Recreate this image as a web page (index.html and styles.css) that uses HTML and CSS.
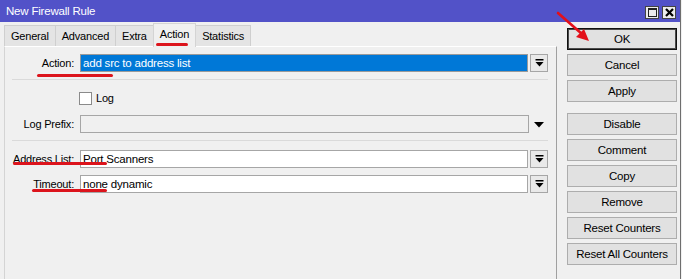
FILE: index.html
```html
<!DOCTYPE html>
<html lang="en">

<head>
  <meta charset="UTF-8">
  <title>New Firewall Rule</title>
  <link rel="stylesheet" href="styles.css">
</head>

<body>
  <div class="window">
    <div class="titlebar">
      <span class="title">New Firewall Rule</span>
      <div class="win-buttons">
        <span class="wbtn max"><span class="max-square"></span></span>
        <span class="wbtn close">
          <svg width="9" height="9" viewBox="0 0 9 9"><path d="M1 1 L8 8 M8 1 L1 8" stroke="#000" stroke-width="2.2" /></svg>
        </span>
      </div>
    </div>

    <div class="body">
      <div class="main">
        <div class="tabs">
          <div class="tab">General</div>
          <div class="tab">Advanced</div>
          <div class="tab">Extra</div>
          <div class="tab selected">Action</div>
          <div class="tab">Statistics</div>
        </div>

        <div class="panel">
          <div class="row first">
            <label class="label">Action:</label>
            <div class="field chosen">add src to address list</div>
            <span class="dd-button">
              <svg width="9" height="8" viewBox="0 0 9 8"><rect x="0.5" y="0" width="8" height="1.5" fill="#000" /><path d="M0.5 3 H8.5 L4.5 7.5 Z" fill="#000" /></svg>
            </span>
          </div>

          <div class="separator"></div>

          <div class="row check-row">
            <span class="label"></span>
            <label class="check"><span class="box"></span>Log</label>
          </div>

          <div class="row">
            <label class="label">Log Prefix:</label>
            <div class="field disabled wide"></div>
            <span class="dd-plain">
              <svg width="10" height="6" viewBox="0 0 10 6"><path d="M0 0 H10 L5 5.5 Z" fill="#000" /></svg>
            </span>
          </div>

          <div class="separator"></div>

          <div class="row">
            <label class="label">Address List:</label>
            <div class="field">Port Scanners</div>
            <span class="dd-button">
              <svg width="9" height="8" viewBox="0 0 9 8"><rect x="0.5" y="0" width="8" height="1.5" fill="#000" /><path d="M0.5 3 H8.5 L4.5 7.5 Z" fill="#000" /></svg>
            </span>
          </div>

          <div class="row">
            <label class="label">Timeout:</label>
            <div class="field">none dynamic</div>
            <span class="dd-button">
              <svg width="9" height="8" viewBox="0 0 9 8"><rect x="0.5" y="0" width="8" height="1.5" fill="#000" /><path d="M0.5 3 H8.5 L4.5 7.5 Z" fill="#000" /></svg>
            </span>
          </div>
        </div>
      </div>

      <div class="buttons">
        <div class="btn default">OK</div>
        <div class="btn">Cancel</div>
        <div class="btn">Apply</div>
        <div class="btn spaced">Disable</div>
        <div class="btn">Comment</div>
        <div class="btn">Copy</div>
        <div class="btn">Remove</div>
        <div class="btn">Reset Counters</div>
        <div class="btn">Reset All Counters</div>
      </div>
    </div>

    <!-- red annotation marks drawn over the dialog -->
    <span class="mark mark-tab"></span>
    <span class="mark mark-action"></span>
    <span class="mark mark-address"></span>
    <span class="mark mark-timeout"></span>
    <svg class="arrow" width="40" height="34" viewBox="0 0 40 34">
      <path d="M2 2 L26 23" stroke="#e3101a" stroke-width="2.6" stroke-linecap="round" />
      <path d="M33 30 L20 26 L28 18 Z" fill="#e3101a" />
    </svg>
  </div>
</body>

</html>
```

FILE: styles.css
```css
body {
  margin: 0;
  background: #f0f0f0;
  font-family: "Liberation Sans", Arial, sans-serif;
  font-size: 11px;
  letter-spacing: -0.2px;
  color: #000;
}

.window {
  position: relative;
  width: 680px;
  height: 279px;
  border-right: 1px solid #6e6e6e;
  background: #f0f0f0;
  overflow: hidden;
}

.titlebar {
  height: 22px;
  background: #5252c8;
  display: flex;
  align-items: center;
  justify-content: space-between;
  padding: 0 4px 0 6px;
}

.title {
  color: #fff;
  font-size: 11.5px;
}

.win-buttons {
  display: flex;
  gap: 3px;
  padding-top: 2px;
}

.wbtn {
  width: 12px;
  height: 11px;
  background: #ececec;
  border: 1px solid #444;
  display: flex;
  align-items: center;
  justify-content: center;
}

.max-square {
  width: 7px;
  height: 6px;
  border: 1px solid #222;
  border-top-width: 2px;
}

.body {
  display: flex;
  gap: 10px;
}

.main {
  margin-left: 4px;
  width: 553px;
}

.tabs {
  display: flex;
  height: 24px;
  align-items: flex-end;
}

.tab {
  height: 20px;
  line-height: 20px;
  padding: 0 6px;
  background: #e4e4e4;
  border: 1px solid #cfcfcf;
  border-bottom: none;
  margin-right: -1px;
}

.tab.selected {
  height: 23px;
  line-height: 21px;
  background: #f0f0f0;
  position: relative;
  z-index: 1;
  margin-bottom: -1px;
  border-color: #d4d4d4;
}

.panel {
  height: 240px;
  border: 1px solid #d4d4d4;
  border-right-color: #a0a0a0;
  border-top-color: #fff;
  padding-top: 7px;
}

.row {
  display: flex;
  align-items: center;
  height: 18px;
  margin-bottom: 7px;
}

.label {
  width: 69px;
  margin-right: 6px;
  text-align: right;
  flex: none;
  white-space: nowrap;
}

.field {
  height: 16px;
  line-height: 16px;
  padding-left: 2px;
  border: 1px solid #a6a6a6;
  background: #fff;
  flex: none;
  width: 444px;
  font-size: 11.5px;
}

.field.chosen {
  background: #0078d7;
  color: #fff;
  border-color: #9a9a9a;
}

.field.disabled {
  background: #f0f0f0;
}

.field.wide {
  width: 445px;
}

.dd-button {
  width: 16px;
  height: 16px;
  margin-left: 2px;
  border: 1px solid #a6a6a6;
  background: #e9e9e9;
  display: flex;
  align-items: center;
  justify-content: center;
}

.dd-plain {
  width: 19px;
  display: flex;
  justify-content: center;
  padding-top: 1px;
}

.separator {
  height: 1px;
  background: #dadada;
  margin: 3px 0 0 7px;
  width: 536px;
  margin-bottom: 9px;
}

.check-row {
  margin-bottom: 8px;
}

.check {
  display: flex;
  align-items: center;
  gap: 4px;
}

.box {
  width: 11px;
  height: 11px;
  border: 1px solid #8a8a8a;
  background: #fff;
  margin-left: -1px;
}

.buttons {
  width: 110px;
  padding-top: 6px;
  display: flex;
  flex-direction: column;
  gap: 4px;
}

.btn {
  height: 20px;
  line-height: 20px;
  text-align: center;
  background: #e1e1e1;
  border: 1px solid #adadad;
  font-size: 11.5px;
}

.btn.default {
  border-color: #111;
  box-shadow: inset 0 0 0 1px #4a4a4a;
}

.btn.spaced {
  margin-top: 7px;
}

.mark {
  position: absolute;
  height: 3px;
  border-radius: 2px;
  background: #dc141c;
}

.mark-tab {
  left: 156px;
  top: 43px;
  width: 32px;
  z-index: 2;
}

.mark-action {
  left: 37px;
  top: 74px;
  width: 76px;
}

.mark-address {
  left: 13px;
  top: 162px;
  width: 94px;
}

.mark-timeout {
  left: 32px;
  top: 189px;
  width: 75px;
}

.arrow {
  position: absolute;
  left: 556px;
  top: 11px;
}
```
